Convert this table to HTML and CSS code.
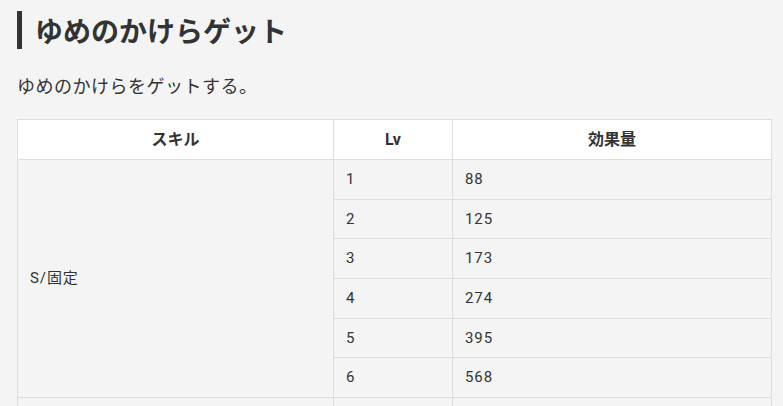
FILE: index.html
```html
<!DOCTYPE html>
<html lang="ja">
<head>
<meta charset="utf-8">
<title>ゆめのかけらゲット</title>
<link rel="stylesheet" href="styles.css">
</head>
<body>
<main class="content">
  <h2 class="heading">ゆめのかけらゲット</h2>
  <p class="lead">ゆめのかけらをゲットする。</p>
  <table class="skill-table">
    <colgroup>
      <col class="col-skill">
      <col class="col-lv">
      <col class="col-amount">
    </colgroup>
    <thead>
      <tr><th>スキル</th><th>Lv</th><th>効果量</th></tr>
    </thead>
    <tbody>
      <tr><td rowspan="6">S/固定</td><td>1</td><td>88</td></tr>
      <tr><td>2</td><td>125</td></tr>
      <tr><td>3</td><td>173</td></tr>
      <tr><td>4</td><td>274</td></tr>
      <tr><td>5</td><td>395</td></tr>
      <tr><td>6</td><td>568</td></tr>
      <tr class="next-row"><td></td><td></td><td></td></tr>
    </tbody>
  </table>
</main>
</body>
</html>
```

FILE: styles.css
```css
html, body {
  margin: 0;
  padding: 0;
  background: #f4f4f4;
  color: #333;
  font-family: "Roboto", "Noto Sans CJK JP", sans-serif;
}

.content {
  padding: 11px 0 0 17px;
}

.heading {
  margin: 0;
  border-left: 5px solid #333;
  padding-left: 13px;
  font-family: "Noto Sans CJK JP", sans-serif;
  font-weight: 700;
  font-size: 28px;
  line-height: 38px;
  color: #333;
}

.lead {
  margin: 23px 0 0;
  font-family: "Noto Sans CJK JP", sans-serif;
  font-size: 18px;
  line-height: 26px;
  letter-spacing: 0.5px;
  color: #333;
}

.skill-table {
  margin-top: 21px;
  width: 754px;
  border-collapse: collapse;
  table-layout: fixed;
  font-size: 15px;
  letter-spacing: 0.06em;
}

.col-skill { width: 316px; }
.col-lv { width: 119px; }
.col-amount { width: 319px; }

.skill-table th,
.skill-table td {
  border: 1px solid #ddd;
  padding: 8px 12px;
  line-height: 22.67px;
  text-align: left;
  vertical-align: middle;
}

.skill-table th {
  background: #fff;
  font-weight: 700;
  font-size: 16px;
  text-align: center;
  line-height: 23px;
  letter-spacing: 0;
}

.skill-table td {
  background: #f4f4f4;
}

.skill-table .next-row td {
  height: 22.67px;
}
```
